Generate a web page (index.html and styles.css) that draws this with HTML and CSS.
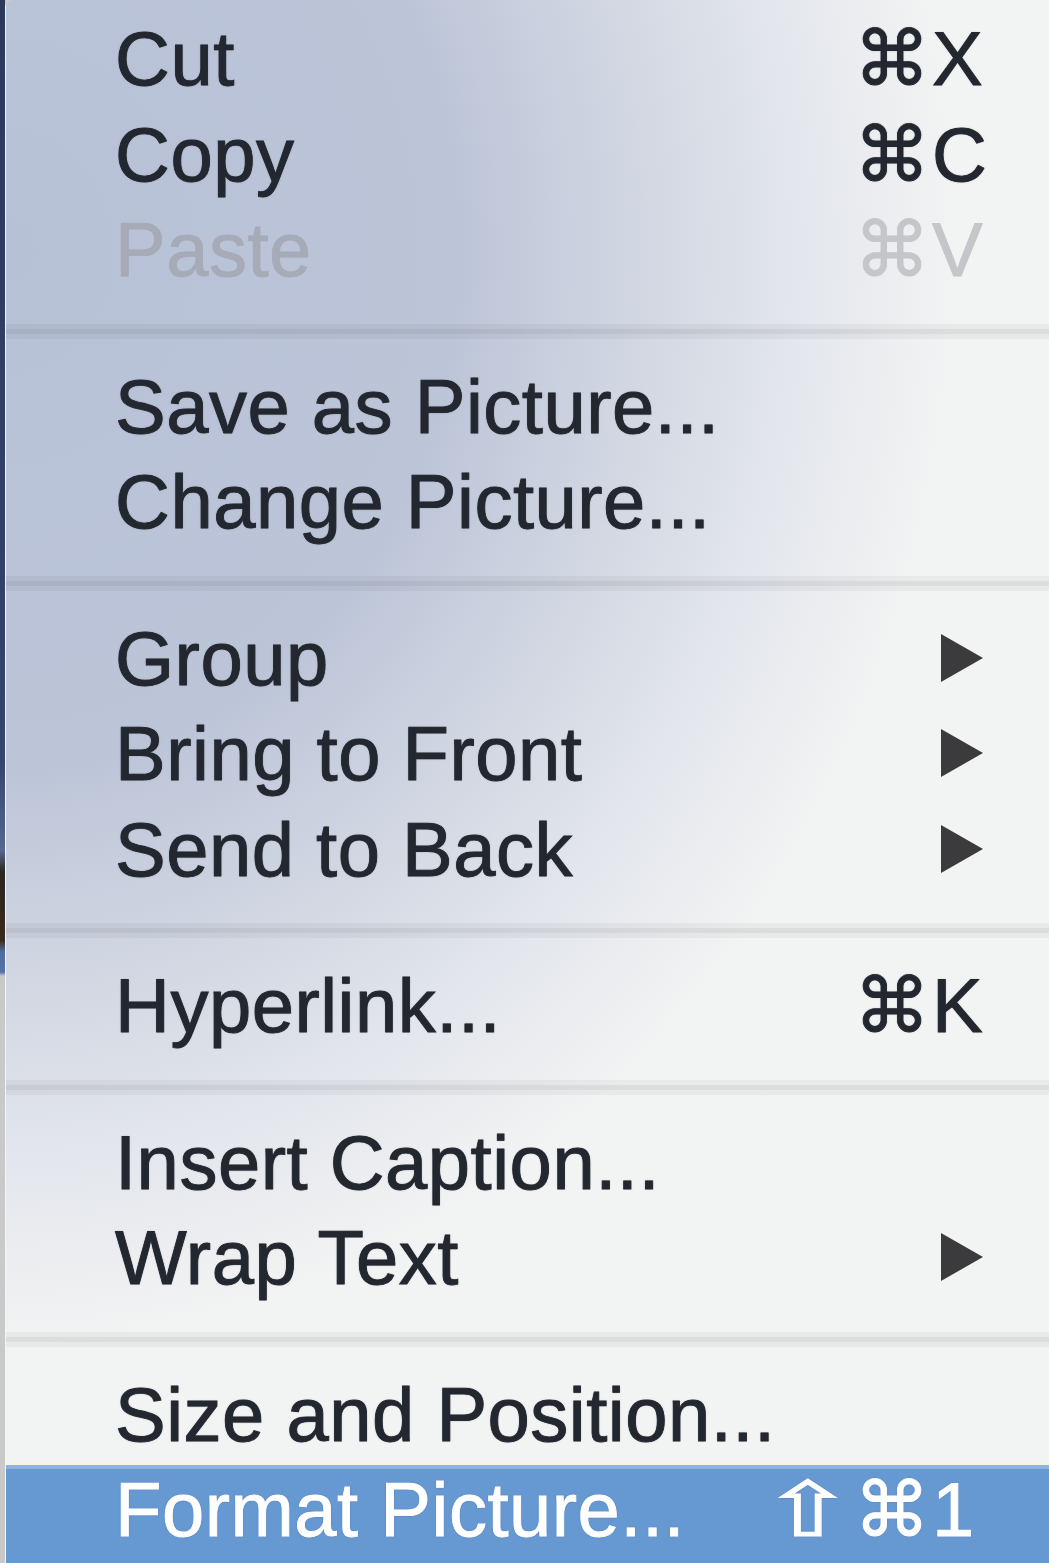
FILE: index.html
```html
<!DOCTYPE html>
<html lang="en">
<head>
    <meta charset="UTF-8">
    <meta name="viewport" content="width=device-width, initial-scale=1.0">
    <title>Picture Context Menu</title>
    <link rel="stylesheet" href="styles.css">
</head>
<body>
    <div class="desktop"></div>

    <div class="menu">
        <div class="item"><span class="label">Cut</span><span class="mods">⌘</span><span class="key">X</span></div>
        <div class="item"><span class="label">Copy</span><span class="mods">⌘</span><span class="key">C</span></div>
        <div class="item disabled"><span class="label">Paste</span><span class="mods">⌘</span><span class="key">V</span></div>

        <div class="sep"></div>

        <div class="item"><span class="label">Save as Picture...</span></div>
        <div class="item"><span class="label">Change Picture...</span></div>

        <div class="sep"></div>

        <div class="item"><span class="label">Group</span><span class="mods"></span><span class="key"><svg class="arrow" viewBox="0 0 42 48"><polygon points="0,0 42,24 0,48"/></svg></span></div>
        <div class="item"><span class="label">Bring to Front</span><span class="mods"></span><span class="key"><svg class="arrow" viewBox="0 0 42 48"><polygon points="0,0 42,24 0,48"/></svg></span></div>
        <div class="item"><span class="label">Send to Back</span><span class="mods"></span><span class="key"><svg class="arrow" viewBox="0 0 42 48"><polygon points="0,0 42,24 0,48"/></svg></span></div>

        <div class="sep"></div>

        <div class="item"><span class="label">Hyperlink...</span><span class="mods">⌘</span><span class="key">K</span></div>

        <div class="sep"></div>

        <div class="item"><span class="label">Insert Caption...</span></div>
        <div class="item"><span class="label">Wrap Text</span><span class="mods"></span><span class="key"><svg class="arrow" viewBox="0 0 42 48"><polygon points="0,0 42,24 0,48"/></svg></span></div>

        <div class="sep"></div>

        <div class="item"><span class="label">Size and Position...</span></div>
        <div class="item selected"><span class="label">Format Picture...</span><span class="mods"><span class="shift">⇧</span>⌘</span><span class="key">1</span></div>
    </div>
</body>
</html>
```

FILE: styles.css
```css
body {
    margin: 0;
    padding: 0;
    height: 1563px;
    display: flex;
    overflow: hidden;
    background-color: #c9c9c9;
    font-family: "Liberation Sans", "DejaVu Sans", Arial, sans-serif;
}

/* strip of the desktop showing left of the menu */
.desktop {
    width: 5px;
    flex-shrink: 0;
    background: linear-gradient(to bottom,
        #2c3a5a 0,
        #34446a 760px,
        #56688f 850px,
        #2b2622 872px,
        #3a2a1e 940px,
        #4f6ea0 952px,
        #5472a4 972px,
        #c9c9c9 976px);
}

.menu {
    flex: 1;
    min-width: 0;
    display: flex;
    flex-direction: column;
    padding-top: 14px;
    border-left: 1px solid rgba(255, 255, 255, 0.12);
    border-top-left-radius: 8px;
    background-color: #f2f3f3;
    background-image: radial-gradient(ellipse 1000px 1150px at 0 250px,
        #b7c1d6 0%,
        #bcc5d8 45%,
        #d3d8e3 65%,
        #e4e7ed 80%,
        #f2f3f3 95%);
}

.item {
    display: grid;
    grid-template-columns: minmax(0, 1fr) 196px 119px;
    height: 95.5px;
    line-height: 90px;
    padding-left: 109px;
    box-sizing: border-box;
    font-size: 76px;
    letter-spacing: 0.5px;
    color: #23272f;
    -webkit-text-stroke: 0.9px #23272f;
    text-shadow: 0 0 1.5px rgba(20, 25, 40, 0.5);
    white-space: nowrap;
}

.mods {
    text-align: right;
    letter-spacing: 0;
}

.shift {
    display: inline-block;
    transform: scaleX(1.5);
    margin-right: 14px;
}

.key {
    padding-left: 2px;
}

.arrow {
    display: block;
    width: 42px;
    height: 48px;
    margin: 20px 0 0 9px;
    fill: #3b3b3d;
}

.disabled .label {
    color: #a6abb7;
    -webkit-text-stroke: 0.9px #a6abb7;
    text-shadow: none;
}

.disabled .mods,
.disabled .key {
    color: #c5c6c9;
    -webkit-text-stroke: 0.9px #c5c6c9;
    text-shadow: none;
}

.selected {
    height: 98px;
    color: #ffffff;
    -webkit-text-stroke: 0.9px #ffffff;
    text-shadow: 0 0 1.5px rgba(40, 70, 130, 0.6);
    background-color: #6698d1;
    box-shadow: inset 0 4px 0 #8db3e1, 0 -3px 0 #f6f2ea;
}

.sep {
    height: 15px;
    margin: 23px 0;
    background: linear-gradient(to bottom,
        rgba(0, 0, 0, 0.045) 0,
        rgba(0, 0, 0, 0.045) 5px,
        rgba(0, 0, 0, 0.09) 5px,
        rgba(0, 0, 0, 0.09) 10px,
        rgba(0, 0, 0, 0.045) 10px);
}
```
